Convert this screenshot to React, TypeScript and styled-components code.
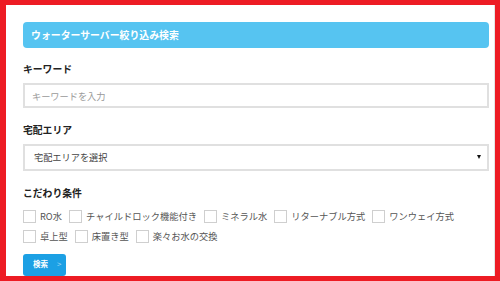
import React from "react";
import styled, { createGlobalStyle } from "styled-components";

const Global = createGlobalStyle`
  html, body { margin: 0; padding: 0; background: #fff; }
  body { font-family: "Noto Sans CJK JP", "Noto Sans", sans-serif; color: #333; }
  * { box-sizing: border-box; }
`;

const Frame = styled.div`
  width: 500px;
  height: 281px;
  overflow: hidden;
  border-style: solid;
  border-color: #ed1c24;
  border-width: 5px 5px 5px 6px;
  background: #fff;
`;

const Panel = styled.div`
  height: 100%;
  padding: 17px 5px 0 17px;
  border-right: 1px solid #e4e4e4;
  display: flex;
  flex-direction: column;
`;

const Header = styled.div`
  height: 28px;
  background: #56c4f1;
  border-radius: 4px;
  color: #fff;
  font-weight: 700;
  font-size: 9.9px;
  display: flex;
  align-items: center;
  padding-left: 8px;
  margin-bottom: 14px;
`;

const Label = styled.div`
  font-size: 9.8px;
  font-weight: 700;
  color: #222;
  line-height: 14px;
  margin-bottom: 7px;
`;

const Field = styled.div<{ $pad?: number; $h?: number }>`
  height: ${(p) => p.$h ?? 27}px;
  border: 2px solid #e0e0e0;
  display: flex;
  align-items: center;
  padding: 0 8px 0 ${(p) => p.$pad ?? 7}px;
  font-size: 9.2px;
  margin-bottom: 15px;
`;

const Placeholder = styled.span`
  color: #9a9a9a;
`;

const Value = styled.span`
  color: #444;
  flex: 1;
`;

const Caret = styled.span`
  width: 0;
  height: 0;
  border-left: 2.5px solid transparent;
  border-right: 2.5px solid transparent;
  border-top: 4px solid #111;
  margin-right: -2px;
`;

const Checks = styled.div`
  display: flex;
  flex-direction: column;
  gap: 7px;
  margin-top: 3px;
`;

const CheckRow = styled.div`
  display: flex;
  align-items: center;
  gap: 7px;
`;

const CheckItem = styled.label`
  display: flex;
  align-items: center;
  gap: 4px;
  font-size: 9.25px;
  color: #555;
  height: 13px;
  white-space: nowrap;
`;

const Box = styled.span`
  width: 13px;
  height: 13px;
  border: 1px solid #cfcfcf;
  background: #fff;
  flex: none;
`;

const Button = styled.button`
  margin-top: 11px;
  width: 43px;
  height: 24px;
  border: none;
  border-radius: 3px;
  background: #1ca0e4;
  color: #fff;
  font-family: inherit;
  font-size: 7.5px;
  font-weight: 700;
  display: flex;
  align-items: center;
  padding: 0 0 2px 10px;
  gap: 9px;
`;

const Chevron = styled.span`
  color: #a9dcf6;
  font-size: 8px;
  font-weight: 400;
`;

const row1 = ["RO水", "チャイルドロック機能付き", "ミネラル水", "リターナブル方式", "ワンウェイ方式"];
const row2 = ["卓上型", "床置き型", "楽々お水の交換"];

export default function App() {
  return (
    <>
      <Global />
      <Frame>
        <Panel>
          <Header>ウォーターサーバー絞り込み検索</Header>
          <Label>キーワード</Label>
          <Field>
            <Placeholder>キーワードを入力</Placeholder>
          </Field>
          <Label>宅配エリア</Label>
          <Field $pad={9} $h={28}>
            <Value>宅配エリアを選択</Value>
            <Caret />
          </Field>
          <Label>こだわり条件</Label>
          <Checks>
            {[row1, row2].map((row, i) => (
              <CheckRow key={i}>
                {row.map((t) => (
                  <CheckItem key={t}>
                    <Box />
                    {t}
                  </CheckItem>
                ))}
              </CheckRow>
            ))}
          </Checks>
          <Button>
            検索<Chevron>&gt;</Chevron>
          </Button>
        </Panel>
      </Frame>
    </>
  );
}
